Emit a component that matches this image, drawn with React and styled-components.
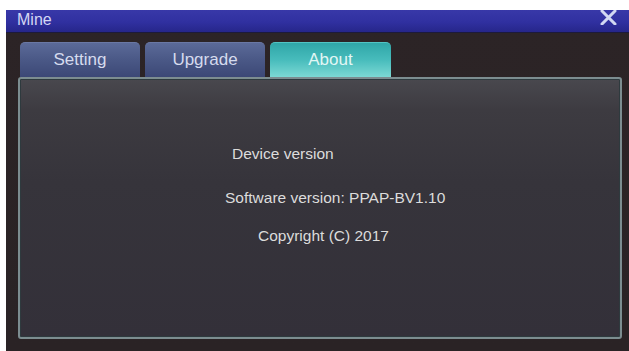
import React from "react";
import styled, { createGlobalStyle } from "styled-components";

const Global = createGlobalStyle`
  html, body { margin: 0; padding: 0; background: #ffffff; }
  body { font-family: "Liberation Sans", Arial, sans-serif; }
  #root { width: 629px; height: 351px; overflow: hidden; }
`;

const Window = styled.div`
  margin: 10px 0 0 6px;
  width: 623px;
  height: 341px;
  display: flex;
  flex-direction: column;
  background: linear-gradient(180deg, #2c2426 0%, #2a2325 100%);
  box-sizing: border-box;
`;

const TitleBar = styled.div`
  height: 23px;
  flex: none;
  display: flex;
  align-items: flex-start;
  justify-content: space-between;
  padding: 0 12px 0 11px;
  box-sizing: border-box;
  background: linear-gradient(180deg, #3838a8 0%, #3030a0 55%, #26268a 100%);
  border-bottom: 1px solid #1c1a3c;
`;

const Title = styled.span`
  font-size: 16px;
  line-height: 18px;
  padding-top: 1px;
  color: #d4d6f4;
`;

const Close = styled.svg`
  width: 17px;
  height: 15px;
`;

const Body = styled.div`
  flex: 1;
  display: flex;
  flex-direction: column;
  padding: 9px 7px 12px 12px;
  box-sizing: border-box;
`;

const TabRow = styled.div`
  display: flex;
  gap: 5px;
  padding-left: 2px;
  height: 35px;
  flex: none;
`;

const Tab = styled.div`
  width: ${(p) => p.$w}px;
  height: 35px;
  box-sizing: border-box;
  border-radius: 5px 5px 0 0;
  display: flex;
  align-items: center;
  justify-content: center;
  font-size: 17px;
  color: ${(p) => (p.$active ? "#e2f6f4" : "#d6dbee")};
  background: ${(p) =>
    p.$active
      ? "linear-gradient(180deg, #2fa6a8 0%, #48bcbc 50%, #7cd9d4 100%)"
      : "linear-gradient(180deg, #5b6a98 0%, #4a5886 50%, #3c4876 100%)"};
  border-top: 1px solid ${(p) => (p.$active ? "#52c4c4" : "#6a78a4")};
`;

const Panel = styled.div`
  flex: 1;
  box-sizing: border-box;
  border: 2px solid #7c8d90;
  border-radius: 3px;
  background: linear-gradient(180deg, #49484e 0%, #3d3b41 12%, #36343b 40%, #333039 100%);
  box-shadow: inset 0 0 0 1px #2e3a3e;
  display: flex;
  flex-direction: column;
  padding-top: 66px;
`;

const Line = styled.div`
  font-size: 15.5px;
  line-height: 18px;
  color: #dcdcdc;
  padding-left: ${(p) => p.$indent}px;
  margin-top: ${(p) => p.$gap}px;
`;

export default function App() {
  return (
    <>
      <Global />
      <Window>
        <TitleBar>
          <Title>Mine</Title>
          <Close viewBox="0 0 17 15">
            <path d="M2 1 L15 14 M15 1 L2 14" stroke="#d2d8f2" strokeWidth="3" strokeLinecap="round" fill="none" />
          </Close>
        </TitleBar>
        <Body>
          <TabRow>
            <Tab $w={120}>Setting</Tab>
            <Tab $w={120}>Upgrade</Tab>
            <Tab $w={121} $active>About</Tab>
          </TabRow>
          <Panel>
            <Line $indent={212} $gap={0}>Device version</Line>
            <Line $indent={205} $gap={26}>Software version: PPAP-BV1.10</Line>
            <Line $indent={238} $gap={20}>Copyright (C) 2017</Line>
          </Panel>
        </Body>
      </Window>
    </>
  );
}
